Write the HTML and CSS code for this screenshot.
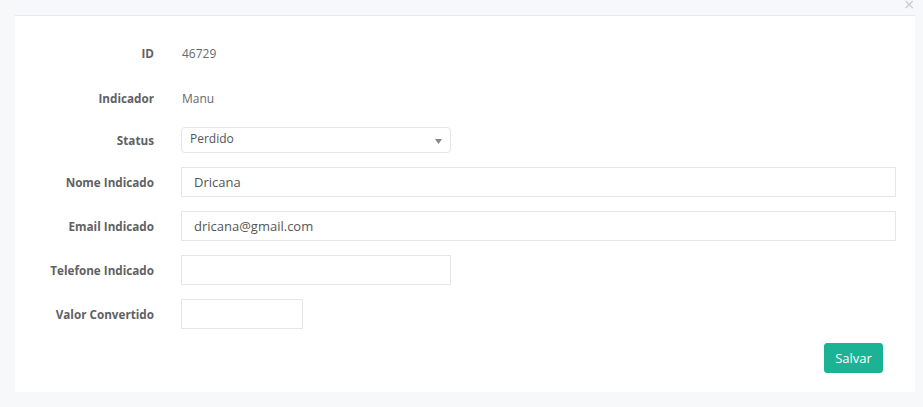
FILE: index.html
```html
<!DOCTYPE html>
<html>
<head>
<meta charset="utf-8">
<link rel="stylesheet" href="styles.css">
</head>
<body>
<div class="modal">
  <div class="modal-top"><span class="close">×</span></div>
  <div class="panel">
    <form class="form">
      <div class="row row-static row-id">
        <label class="label">ID</label>
        <div class="value">46729</div>
      </div>
      <div class="row row-static row-ind">
        <label class="label">Indicador</label>
        <div class="value">Manu</div>
      </div>
      <div class="row row-status">
        <label class="label">Status</label>
        <div class="select">
          <span>Perdido</span>
          <svg class="caret" width="7" height="5" viewBox="0 0 7 5"><path d="M0 0h7L3.5 5z" fill="#888"/></svg>
        </div>
      </div>
      <div class="row">
        <label class="label">Nome Indicado</label>
        <div class="input input-full">Dricana</div>
      </div>
      <div class="row">
        <label class="label">Email Indicado</label>
        <div class="input input-full">dricana@gmail.com</div>
      </div>
      <div class="row">
        <label class="label">Telefone Indicado</label>
        <div class="input input-md"></div>
      </div>
      <div class="row">
        <label class="label">Valor Convertido</label>
        <div class="input input-sm"></div>
      </div>
      <div class="actions">
        <button type="button" class="btn">Salvar</button>
      </div>
    </form>
  </div>
</div>
</body>
</html>
```
FILE: styles.css
```css
* { box-sizing: border-box; }
html, body { margin: 0; padding: 0; }
body {
  background: #f7f8fa;
  font-family: "Open Sans", "Noto Sans", sans-serif;
  color: #676a6c;
  width: 923px;
  height: 407px;
  overflow: hidden;
}
.modal { padding: 0 8px 0 15px; }
.modal-top {
  height: 15px;
  position: relative;
}
.close {
  position: absolute;
  right: 0;
  top: -4px;
  font-size: 14px;
  line-height: 17px;
  color: #c8c8c8;
  font-family: "DejaVu Sans", sans-serif;
}
.panel {
  width: 900px;
  height: 377px;
  background: #fff;
  border-top: 1px solid #e7eaec;
}
.form {
  padding: 22px 19px 0 0;
  display: flex;
  flex-direction: column;
}
.row {
  display: flex;
  align-items: center;
  min-height: 30px;
  margin-bottom: 14px;
}
.row-id { margin-bottom: 15px; }
.row-ind { margin-bottom: 12px; }
.row-status { margin-bottom: 12px; }
.label {
  width: 139px;
  text-align: right;
  font-weight: 700;
  font-size: 11.7px;
  color: #5f6163;
  margin-right: 27px;
  flex: none;
}
.value {
  font-size: 12px;
  color: #676a6c;
  padding-left: 1px;
}
.select {
  width: 270px;
  height: 26px;
  border: 1px solid #e5e6e7;
  border-radius: 4px;
  display: flex;
  align-items: center;
  justify-content: space-between;
  padding: 0 8px 0 8px;
  font-size: 12px;
  color: #555;
}
.select span { margin-top: -3px; }
.caret { margin-top: 2px; }
.input {
  height: 30px;
  border: 1px solid #e5e6e7;
  font-size: 13px;
  color: #555;
  padding: 0 12px;
  display: flex;
  align-items: center;
}
.input-full { flex: 1; }
.input-md { width: 270px; }
.input-sm { width: 122px; }
.actions {
  display: flex;
  justify-content: flex-end;
  padding-right: 13px;
}
.btn {
  width: 59px;
  height: 30px;
  background: #1ab394;
  border: 1px solid #1ab394;
  border-radius: 3px;
  color: #fff;
  font-family: "Open Sans", "Noto Sans", sans-serif;
  font-size: 13px;
  padding: 0;
}
```
